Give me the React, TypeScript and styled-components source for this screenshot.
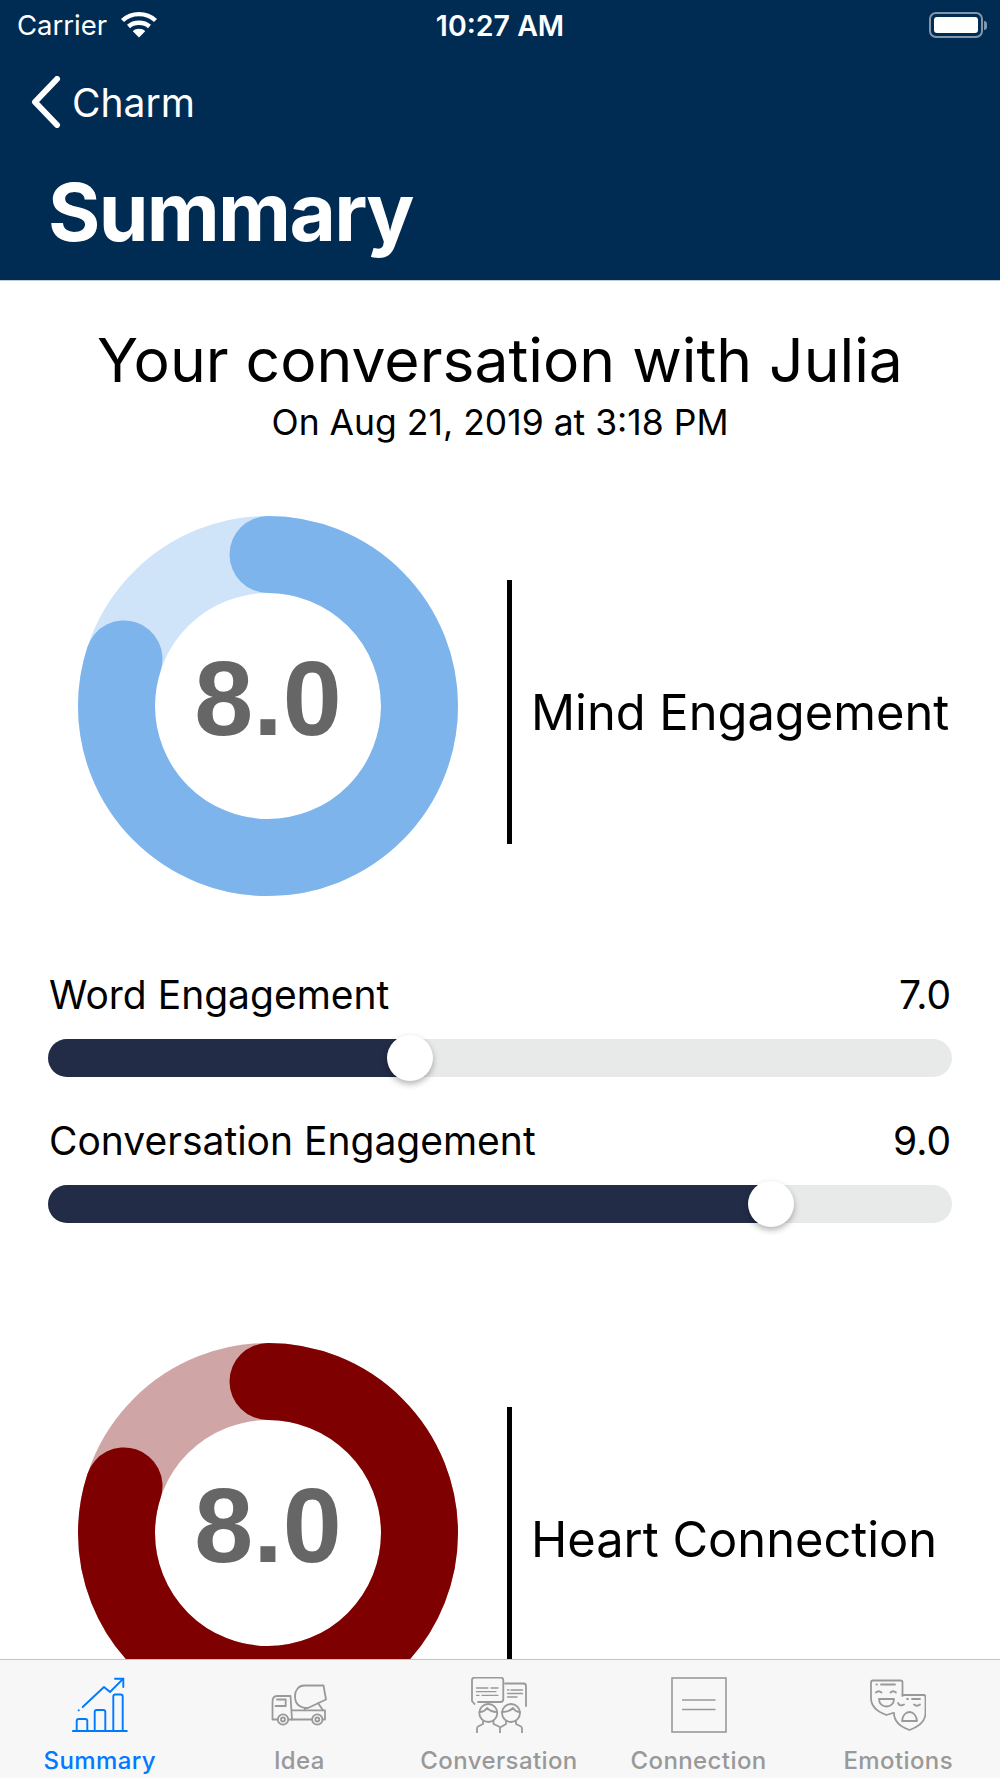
import styled, { createGlobalStyle } from "styled-components"

const GlobalStyle = createGlobalStyle`
html, body {
  margin: 0;
  padding: 0;
  background: #fff;
}
* {
  box-sizing: border-box;
}
body {
  font-family: Inter, "Liberation Sans", sans-serif;
}
`

const WifiIcon = () => (
  <svg width="38" height="28" viewBox="0 0 38 28" fill="none" stroke="#fff" strokeWidth="4.4">
    <path d="M2.5 10.5C11.5 2 26.5 2 35.5 10.5" />
    <path d="M8.5 16.5C14 11.5 24 11.5 29.5 16.5" />
    <path d="M19 27.5L12.8 21.2C16 18 22 18 25.2 21.2Z" fill="#fff" stroke="none" />
  </svg>
)

const BackIcon = () => (
  <svg width="30" height="52" viewBox="0 0 30 52" fill="none" stroke="#fff" strokeWidth="6" strokeLinecap="round" strokeLinejoin="round">
    <path d="M26 3L4 26L26 49" />
  </svg>
)

const SummaryIcon = () => (
  <svg width="56" height="56" viewBox="0 0 56 56" fill="none" stroke="currentColor" strokeWidth="1.9" strokeLinecap="round" strokeLinejoin="round">
    <path d="M1 54H54.7" strokeWidth="2.2" />
    <path d="M4.7 54V44Q4.7 42 6.7 42H13.3Q15.3 42 15.3 44V54" />
    <path d="M22.7 54V35Q22.7 33 24.7 33H31.3Q33.3 33 33.3 35V54" />
    <path d="M41.3 54V19.5Q41.3 17.5 43.3 17.5H48.7Q50.7 17.5 50.7 19.5V54" />
    <path d="M10.7 30L32 10L38 15L51.3 1.7" />
    <path d="M43 1.7H51.3V10" />
    <path d="M6.7 33.3V33.4" />
  </svg>
)

const TruckIcon = () => (
  <svg width="56" height="56" viewBox="0 0 56 56" fill="none" stroke="currentColor" strokeWidth="1.8" strokeLinecap="round" strokeLinejoin="round">
    <path d="M7 42.5H1.5V25Q1.5 19 6 19H19.5L21 42.5H17.5" />
    <path d="M6 22.5H14.7V29H4.5" />
    <path d="M21 33.3H54V42.5H51.5M41 42.5H21" />
    <circle cx="12" cy="42.5" r="5.2" />
    <circle cx="12" cy="42.5" r="2" />
    <circle cx="46.3" cy="42.5" r="5.2" />
    <circle cx="46.3" cy="42.5" r="2" />
    <path d="M33 8.5H52.5L55 22.5L37 31C28 31 24 26 24 19C24 13 28 8.5 33 8.5Z" />
    <path d="M34 31V33.3M47 26L52 33.3" />
  </svg>
)

const ConversationIcon = () => (
  <svg width="56" height="56" viewBox="0 0 56 56" fill="none" stroke="currentColor" strokeWidth="1.8" strokeLinecap="round" strokeLinejoin="round">
    <path d="M3.5 27L1 24V3Q1 .7 3.5 .7H29.5Q32.3 .7 32.3 3V22Q32.3 25 29.5 25H7" />
    <path d="M5.5 11H17M20 11H27M5.5 14.7H25M5.5 18.3H8M11 18.3H27" strokeWidth="1.3" />
    <path d="M34 6.5H52.5Q55 6.5 55 9V29" />
    <path d="M36.5 13H38M40 13H51.5M36.5 16.5H51.5M36.5 20H46" strokeWidth="1.3" />
    <circle cx="17.3" cy="36" r="9" />
    <path d="M8.5 35C12 35 14 34 16 31C19 34 22 35 26 35" />
    <path d="M12 44.5V47L7 49.5Q6 50 6 52V55.5M22.5 44.5V47L28 49.5Q29 50 29 52V55.5" />
    <circle cx="40" cy="36" r="9" />
    <path d="M31 35C36 35 39 34 42 31C44 34 46 35 49 35" />
    <path d="M35 44.5V47L30 50M45 44.5V47L50 49.5Q51 50 51 52V55.5" />
  </svg>
)

const ConnectionIcon = () => (
  <svg width="56" height="56" viewBox="0 0 56 56" fill="none" stroke="currentColor" strokeWidth="1.6">
    <rect x="1" y="1" width="54" height="54" />
    <path d="M11 23H44.5M11 32.5H44.5" />
  </svg>
)

const EmotionsIcon = () => (
  <svg width="56" height="56" viewBox="0 0 56 56" fill="none" stroke="currentColor" strokeWidth="1.8" strokeLinecap="round" strokeLinejoin="round">
    <path d="M23 36L16.5 38C8 35 1 30 1 21V5.5Q1 3.5 3 3.5H30.5Q32.5 3.5 32.5 5.5V19" />
    <path d="M6.5 7.5H7M11 7.5H25" />
    <path d="M6 15.5Q8.5 13 11.5 15.5M20.5 15.5Q23 13 26 15.5" />
    <path d="M9 22H24C24 32 9 32 9 22Z" />
    <path d="M32.5 18H53.5Q55.5 18 55.5 20V36C55.5 45 48 50 39.5 53C31 50 24 45 24 36" />
    <path d="M37 22H38M42 22H50" />
    <path d="M28 26Q30 30 34 27.5M44 27.5Q47 30 50 27.5" />
    <path d="M32 44C33 32 46 32 47 44Z" />
  </svg>
)

type RingProps = { value: number; color: string; track: string }

// 8.0 out of 10 ends the arc at 80% of the way round
const Ring = ({ value, color, track }: RingProps) => {
  const radius = 151.5
  const full = 2 * Math.PI * radius
  return (
    <RingBox>
      <RingSvg width="380" height="380" viewBox="0 0 380 380">
        <circle cx="190" cy="190" r={radius} fill="none" stroke={track} strokeWidth="77" />
        <circle
          cx="190"
          cy="190"
          r={radius}
          fill="none"
          stroke={color}
          strokeWidth="77"
          strokeLinecap="round"
          strokeDasharray={`${(full * value) / 10} ${full}`}
          transform="rotate(-90 190 190)"
        />
      </RingSvg>
      <RingValue>{value.toFixed(1)}</RingValue>
    </RingBox>
  )
}

const Metric = ({ label, ...ring }: RingProps & { label: string }) => (
  <MetricRow>
    <Ring {...ring} />
    <MetricLabel>{label}</MetricLabel>
  </MetricRow>
)

const Slider = ({ label, value }: { label: string; value: number }) => (
  <SliderRow>
    <SliderHead>
      <span>{label}</span>
      <span>{value.toFixed(1)}</span>
    </SliderHead>
    <Track>
      {/* the bar's scale runs from 5 to 10 */}
      <Fill style={{ width: `${(value - 5) * 20}%` }} />
      <Thumb style={{ left: `${(value - 5) * 20}%` }} />
    </Track>
  </SliderRow>
)

const tabs = [
  { label: "Summary", icon: <SummaryIcon />, active: true },
  { label: "Idea", icon: <TruckIcon /> },
  { label: "Conversation", icon: <ConversationIcon /> },
  { label: "Connection", icon: <ConnectionIcon /> },
  { label: "Emotions", icon: <EmotionsIcon /> },
]

const App = () => {
  return (
    <Page>
      <GlobalStyle />
      <Header>
        <StatusBar>
          <Carrier>
            Carrier
            <WifiIcon />
          </Carrier>
          <Clock>10:27 AM</Clock>
          <Battery>
            <BatteryBody>
              <BatteryLevel />
            </BatteryBody>
            <BatteryNub />
          </Battery>
        </StatusBar>
        <Nav>
          <BackIcon />
          <NavText>Charm</NavText>
        </Nav>
        <Title>Summary</Title>
      </Header>
      <Content>
        <Heading>Your conversation with Julia</Heading>
        <Sub>On Aug 21, 2019 at 3:18 PM</Sub>
        <Metric label="Mind Engagement" value={8} color="#7db4ec" track="#d0e4f9" />
        <Sliders>
          <Slider label="Word Engagement" value={7} />
          <Slider label="Conversation Engagement" value={9} />
        </Sliders>
        <Metric label="Heart Connection" value={8} color="#7f0000" track="#cfa5a5" />
      </Content>
      <TabBar>
        {tabs.map((t) => (
          <Tab key={t.label} $active={t.active}>
            {t.icon}
            <TabLabel>{t.label}</TabLabel>
          </Tab>
        ))}
      </TabBar>
    </Page>
  )
}

export default App

const Page = styled.div`
width: 1000px;
height: 1778px;
display: flex;
flex-direction: column;
overflow: hidden;
background: #fff;
`
const Header = styled.div`
height: 281px;
flex-shrink: 0;
background: #002c54;
border-bottom: 1px solid #c3ccd6;
color: #fff;
`
const StatusBar = styled.div`
height: 50px;
display: grid;
grid-template-columns: 1fr auto 1fr;
align-items: center;
padding: 0 13px 0 17px;
`
const Carrier = styled.div`
display: flex;
align-items: center;
gap: 13px;
font-size: 27.5px;
svg {
  margin-top: -3px;
}
`
const Clock = styled.div`
font-size: 28.5px;
font-weight: 600;
margin-right: 4px;
`
const Battery = styled.div`
justify-self: end;
display: flex;
align-items: center;
`
const BatteryBody = styled.div`
width: 54px;
height: 26px;
padding: 3px;
border: 2px solid #8296aa;
border-radius: 7px;
`
const BatteryLevel = styled.div`
width: 100%;
height: 100%;
background: #fff;
border-radius: 3px;
`
const BatteryNub = styled.div`
width: 3px;
height: 9px;
margin-left: 1px;
background: #8296aa;
border-radius: 0 3px 3px 0;
`
const Nav = styled.div`
height: 104px;
display: flex;
align-items: center;
gap: 11px;
padding-left: 31px;
`
const NavText = styled.div`
font-size: 39px;
`
const Title = styled.div`
font-size: 80px;
font-weight: 700;
line-height: 100px;
padding-left: 48px;
margin-top: 8px;
letter-spacing: -1.7px;
`
const Content = styled.div`
flex: 1;
min-height: 0;
overflow: hidden;
`
const Heading = styled.div`
margin-top: 42px;
font-size: 60.6px;
line-height: 74px;
text-align: center;
color: #000;
`
const Sub = styled.div`
margin-top: 6px;
font-size: 35.5px;
line-height: 40px;
text-align: center;
color: #000;
`
const MetricRow = styled.div`
display: flex;
align-items: flex-start;
padding-left: 78px;
margin-top: 73px;
`
const RingBox = styled.div`
width: 380px;
height: 380px;
flex-shrink: 0;
display: grid;
`
const RingSvg = styled.svg`
grid-area: 1 / 1;
`
const RingValue = styled.div`
grid-area: 1 / 1;
place-self: center;
margin-bottom: 17px;
font-family: "Liberation Sans", sans-serif;
font-size: 106px;
font-weight: 700;
line-height: 1;
color: #666;
`
const MetricLabel = styled.div`
height: 264px;
margin: 64px 0 0 49px;
padding-left: 19px;
border-left: 5px solid #000;
display: flex;
align-items: center;
font-size: 48.8px;
white-space: nowrap;
color: #000;
`
const Sliders = styled.div`
padding: 0 48px;
margin: 76px 0 120px;
display: flex;
flex-direction: column;
gap: 41px;
`
const SliderRow = styled.div`
display: flex;
flex-direction: column;
gap: 21px;
`
const SliderHead = styled.div`
display: flex;
justify-content: space-between;
padding: 0 1px;
font-size: 39px;
line-height: 46px;
color: #000;
`
const Track = styled.div`
position: relative;
height: 38px;
border-radius: 19px;
background: #e8eaea;
`
const Fill = styled.div`
height: 100%;
border-radius: 19px 0 0 19px;
background: #222c47;
`
const Thumb = styled.div`
position: absolute;
top: -4px;
width: 46px;
height: 46px;
margin-left: -23px;
border-radius: 50%;
background: #fff;
box-shadow: 0 3px 6px rgba(0, 0, 0, 0.3);
`
const TabBar = styled.div`
height: 119px;
flex-shrink: 0;
padding-right: 2px;
background: #f7f7f7;
border-top: 1px solid #c5c5c5;
display: grid;
grid-template-columns: repeat(5, 1fr);
`
const Tab = styled.div<{ $active?: boolean }>`
display: flex;
flex-direction: column;
align-items: center;
padding-top: 17px;
color: ${(p) => (p.$active ? "#007aff" : "#999")};
`
const TabLabel = styled.div`
margin-top: 13px;
font-size: 24px;
font-weight: 500;
line-height: 30px;
letter-spacing: 0.4px;
`
